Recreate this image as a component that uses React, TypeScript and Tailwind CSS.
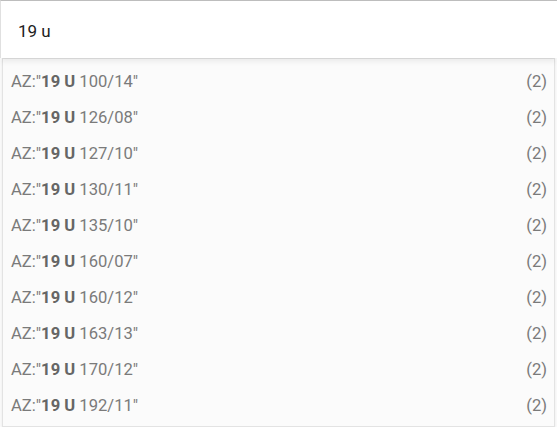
import React from "react";

const items = ["100/14", "126/08", "127/10", "130/11", "135/10", "160/07", "160/12", "163/13", "170/12", "192/11"];

export default function App() {
  return (
    <div className="relative w-[557px] h-[427px] overflow-hidden bg-white" style={{ fontFamily: "Roboto, 'Noto Sans', sans-serif" }}>
      <div className="h-[58px] border-t border-l border-t-[#bdbdbd] border-l-[#e0e0e0] flex items-center pl-[17px] pt-[4px] text-[17px] text-[#212121] bg-white shadow-[0_3px_6px_rgba(0,0,0,0.08)] relative z-10">
        19 u
      </div>
      <div className="mx-[2px] w-[553px] bg-[#fbfbfb] border border-[#e3e3e3] pt-[5px] pb-[2px] shadow-[0_2px_4px_rgba(0,0,0,0.1)]">
        {items.map((it) => (
          <div key={it} className="h-[36px] flex items-center justify-between pl-[8px] pr-[7px] text-[16.6px] text-[#7a7a7a]">
            <span>
              AZ:"<b className="font-bold text-[#666]">19 U</b> {it}"
            </span>
            <span>(2)</span>
          </div>
        ))}
      </div>
    </div>
  );
}
